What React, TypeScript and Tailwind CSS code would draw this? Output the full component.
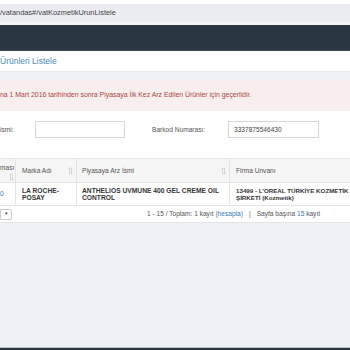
import React from "react";

function SortIcon() {
  return (
    <svg width="5" height="8" viewBox="0 0 5 8" className="shrink-0">
      <path d="M1.5 7.5V1M0.5 2L1.5 0.8L2.5 2" stroke="#cfcfcf" strokeWidth="0.8" fill="none" />
      <path d="M3.5 0.5V7M2.5 6L3.5 7.2L4.5 6" stroke="#cfcfcf" strokeWidth="0.8" fill="none" />
    </svg>
  );
}

export default function App() {
  return (
    <div
      className="w-[350px] h-[350px] overflow-hidden flex flex-col bg-[#eef1f5] text-[#333]"
      style={{ fontFamily: '"Liberation Sans", Arial, sans-serif' }}
    >
      {/* Browser chrome */}
      <div className="h-[4px] bg-white" />
      <div className="h-[18px] bg-[#ebecf2] flex items-center text-[7.4px] text-[#444]">
        <span>/vatandas#/vatKozmetikUrunListele</span>
      </div>
      <div className="h-[3px] bg-[#f6f6f9]" />

      {/* Top nav */}
      <div className="h-[26px] bg-[#2b3643] border-b border-[#3e4b58]" />

      {/* Page title */}
      <div className="h-[21px] bg-white flex items-center border-b border-[#e7ecf1]">
        <span className="text-[8.5px] text-[#4b8db5]">Ürünleri Listele</span>
      </div>

      {/* Content */}
      <div className="pt-[8px]">
        <div className="bg-[#f9eeee] h-[31px] flex items-center text-[6.9px] text-[#a94442]">
          <span>na 1 Mart 2016 tarihinden sonra Piyasaya İlk Kez Arz Edilen Ürünler için geçerlidir.</span>
        </div>

        <div className="bg-white pt-[10px] pb-[20px]">
          <div className="flex items-center h-[17px] text-[6.6px] text-[#555]">
            <span className="w-[35px] shrink-0">ismi:</span>
            <div className="w-[90px] shrink-0 h-[17px] border border-[#d6d6d6] bg-white" />
            <span className="ml-[27px] w-[76px] shrink-0">Barkod Numarası:</span>
            <div className="w-[91px] shrink-0 h-[17px] border border-[#d6d6d6] bg-white flex items-center pl-[5px] text-[#444]">
              3337875546430
            </div>
          </div>
        </div>

        {/* Table */}
        <div className="bg-white text-[6.6px]">
          <div className="flex h-[25px] bg-[#f5f5f5] border-y border-[#e4e4e4] text-[#555]">
            <div className="w-[16px] shrink-0 border-r border-[#e4e4e4] flex flex-col pt-[5px] leading-[8px]">
              <span>ması</span>
              <div className="pl-[9px] pt-[1px]">
                <SortIcon />
              </div>
            </div>
            <div className="w-[61px] shrink-0 border-r border-[#e4e4e4] flex items-center pl-[6px] pr-[3px]">
              <span className="flex-1">Marka Adı</span>
              <SortIcon />
            </div>
            <div className="w-[153px] shrink-0 border-r border-[#e4e4e4] flex items-center pl-[5px] pr-[3px]">
              <span className="flex-1">Piyasaya Arz İsmi</span>
              <SortIcon />
            </div>
            <div className="flex-1 min-w-0 flex items-center pl-[6px] whitespace-nowrap">
              <span>Firma Unvanı</span>
            </div>
          </div>

          <div className="flex h-[23px] border-b border-[#e4e4e4] font-bold leading-[7.5px] text-[6.7px]">
            <div className="w-[16px] shrink-0 border-r border-[#e4e4e4] flex items-center font-normal text-[#337ab7]">
              0
            </div>
            <div className="w-[61px] shrink-0 border-r border-[#e4e4e4] flex items-center pl-[6px]">
              <span>
                LA ROCHE-
                <br />
                POSAY
              </span>
            </div>
            <div className="w-[153px] shrink-0 border-r border-[#e4e4e4] flex items-center pl-[5px]">
              <span>
                ANTHELIOS UVMUNE 400 GEL CREME OIL
                <br />
                CONTROL
              </span>
            </div>
            <div className="flex-1 min-w-0 flex items-center pl-[6px] whitespace-nowrap text-[6.2px]">
              <span>
                13499 - L'OREAL TÜRKİYE KOZMETİK
                <br />
                ŞİRKETİ (Kozmetik)
              </span>
            </div>
          </div>

          <div className="flex items-center h-[17px] border-b border-[#e4e4e4] text-[#555]">
            <div className="w-[12px] shrink-0 h-[11px] border border-[#ccc] rounded-r-[2px] flex items-center justify-center text-[5px] text-[#444]">
              ▾
            </div>
            <div className="ml-[135px] whitespace-nowrap">
              1 - 15 / Toplam: 1 kayıt <span className="text-[#337ab7]">(hesapla)</span>
              <span className="mx-[6px]">|</span>
              Sayfa başına <span className="text-[#337ab7]">15</span> kayıt
            </div>
          </div>
        </div>
      </div>

      <div className="flex-1" />
      <div className="h-[1px] bg-[#b9c3cd]" />
      <div className="h-[2px] bg-[#2b3643]" />
    </div>
  );
}
